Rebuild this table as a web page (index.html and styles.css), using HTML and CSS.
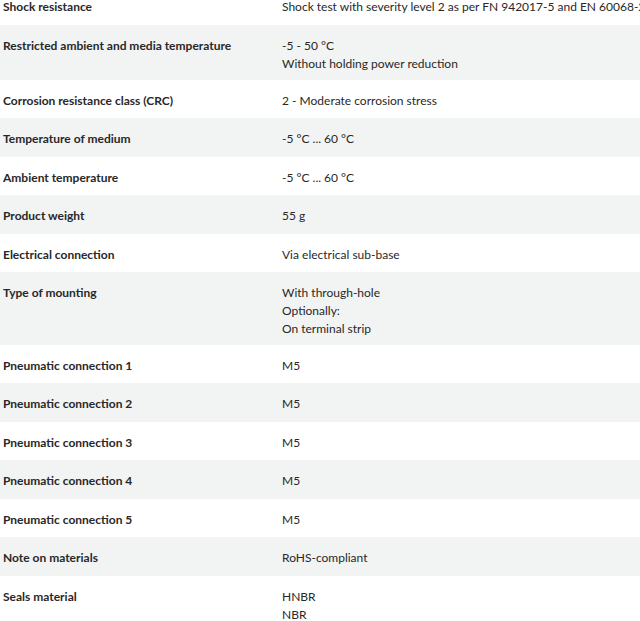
FILE: index.html
```html
<!DOCTYPE html>
<html lang="en">
<head>
<meta charset="utf-8">
<title>Technical data</title>
<link rel="stylesheet" href="styles.css">
</head>
<body>
<div class="specs">
  <div class="row"><div class="label">Shock resistance</div><div class="value">Shock test with severity level 2 as per FN 942017-5 and EN 60068-2-27</div></div>
  <div class="row"><div class="label">Restricted ambient and media temperature</div><div class="value">-5 - 50 °C<br>Without holding power reduction</div></div>
  <div class="row"><div class="label">Corrosion resistance class (CRC)</div><div class="value">2 - Moderate corrosion stress</div></div>
  <div class="row"><div class="label">Temperature of medium</div><div class="value">-5 °C ... 60 °C</div></div>
  <div class="row"><div class="label">Ambient temperature</div><div class="value">-5 °C ... 60 °C</div></div>
  <div class="row"><div class="label">Product weight</div><div class="value">55 g</div></div>
  <div class="row"><div class="label">Electrical connection</div><div class="value">Via electrical sub-base</div></div>
  <div class="row"><div class="label">Type of mounting</div><div class="value">With through-hole<br>Optionally:<br>On terminal strip</div></div>
  <div class="row"><div class="label">Pneumatic connection 1</div><div class="value">M5</div></div>
  <div class="row"><div class="label">Pneumatic connection 2</div><div class="value">M5</div></div>
  <div class="row"><div class="label">Pneumatic connection 3</div><div class="value">M5</div></div>
  <div class="row"><div class="label">Pneumatic connection 4</div><div class="value">M5</div></div>
  <div class="row"><div class="label">Pneumatic connection 5</div><div class="value">M5</div></div>
  <div class="row"><div class="label">Note on materials</div><div class="value">RoHS-compliant</div></div>
  <div class="row"><div class="label">Seals material</div><div class="value">HNBR<br>NBR</div></div>
</div>
</body>
</html>
```
FILE: styles.css
```css
html, body {
  margin: 0;
  padding: 0;
  background: #ffffff;
  overflow: hidden;
}
body {
  font-family: Lato, "Open Sans", sans-serif;
  font-size: 12px;
  line-height: 18px;
  color: #282828;
}
.specs {
  margin-top: -13.6px;
  display: flex;
  flex-direction: column;
}
.row {
  display: grid;
  grid-template-columns: 279px 1fr;
  align-items: start;
  padding: 12px 0 7px;
  min-height: 19.45px;
}
.row:nth-child(even) {
  background: #f2f3f3;
}
.label {
  padding-left: 3px;
  font-weight: 700;
  white-space: nowrap;
}
.value {
  padding-left: 3px;
  white-space: nowrap;
}
```
